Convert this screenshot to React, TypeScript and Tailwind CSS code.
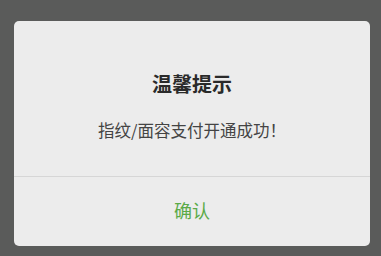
export default function App() {
  return (
    <div
      className="w-[381px] h-[256px] bg-[#5a5b5a] pt-[21px] pl-[14px]"
      style={{ fontFamily: '"Noto Sans CJK SC", "Noto Sans", sans-serif' }}
    >
      <div className="w-[356px] h-[225px] bg-[#ececec] rounded-[5px] flex flex-col">
        <div className="h-[155px] flex flex-col items-center pt-[49px]">
          <div className="text-[20px] leading-[28px] font-bold text-[#2a2a2a]">温馨提示</div>
          <div className="mt-[20px] text-[16.5px] leading-[24px] text-[#444444]">指纹/面容支付开通成功！</div>
        </div>
        <div className="h-px bg-[#d6d6d6]" />
        <div className="flex-1 flex items-center justify-center pb-[3px]">
          <span className="text-[18px] leading-[26px] text-[#5aaa47]">确认</span>
        </div>
      </div>
    </div>
  );
}
